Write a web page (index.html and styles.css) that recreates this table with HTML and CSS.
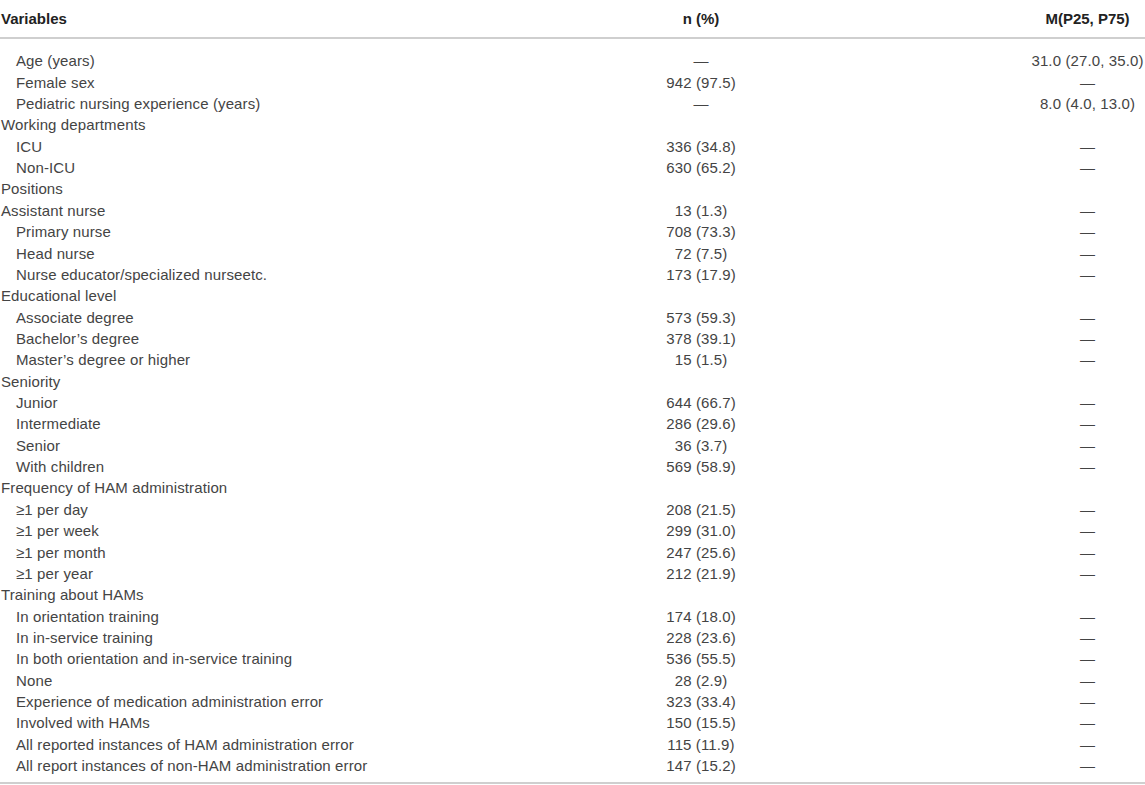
FILE: index.html
```html
<!DOCTYPE html>
<html>
<head>
<meta charset="utf-8">
<link rel="stylesheet" href="styles.css">
</head>
<body>
<div class="table">
  <div class="row head">
    <div class="c1">Variables</div>
    <div class="c2">n (%)</div>
    <div class="c3">M(P25, P75)</div>
  </div>
  <div class="body">
    <div class="row"><div class="c1 ind">Age (years)</div><div class="c2">—</div><div class="c3">31.0 (27.0, 35.0)</div></div>
    <div class="row"><div class="c1 ind">Female sex</div><div class="c2">942 (97.5)</div><div class="c3">—</div></div>
    <div class="row"><div class="c1 ind">Pediatric nursing experience (years)</div><div class="c2">—</div><div class="c3">8.0 (4.0, 13.0)</div></div>
    <div class="row"><div class="c1">Working departments</div><div class="c2"></div><div class="c3"></div></div>
    <div class="row"><div class="c1 ind">ICU</div><div class="c2">336 (34.8)</div><div class="c3">—</div></div>
    <div class="row"><div class="c1 ind">Non-ICU</div><div class="c2">630 (65.2)</div><div class="c3">—</div></div>
    <div class="row"><div class="c1">Positions</div><div class="c2"></div><div class="c3"></div></div>
    <div class="row"><div class="c1">Assistant nurse</div><div class="c2">13 (1.3)</div><div class="c3">—</div></div>
    <div class="row"><div class="c1 ind">Primary nurse</div><div class="c2">708 (73.3)</div><div class="c3">—</div></div>
    <div class="row"><div class="c1 ind">Head nurse</div><div class="c2">72 (7.5)</div><div class="c3">—</div></div>
    <div class="row"><div class="c1 ind">Nurse educator/specialized nurseetc.</div><div class="c2">173 (17.9)</div><div class="c3">—</div></div>
    <div class="row"><div class="c1">Educational level</div><div class="c2"></div><div class="c3"></div></div>
    <div class="row"><div class="c1 ind">Associate degree</div><div class="c2">573 (59.3)</div><div class="c3">—</div></div>
    <div class="row"><div class="c1 ind">Bachelor’s degree</div><div class="c2">378 (39.1)</div><div class="c3">—</div></div>
    <div class="row"><div class="c1 ind">Master’s degree or higher</div><div class="c2">15 (1.5)</div><div class="c3">—</div></div>
    <div class="row"><div class="c1">Seniority</div><div class="c2"></div><div class="c3"></div></div>
    <div class="row"><div class="c1 ind">Junior</div><div class="c2">644 (66.7)</div><div class="c3">—</div></div>
    <div class="row"><div class="c1 ind">Intermediate</div><div class="c2">286 (29.6)</div><div class="c3">—</div></div>
    <div class="row"><div class="c1 ind">Senior</div><div class="c2">36 (3.7)</div><div class="c3">—</div></div>
    <div class="row"><div class="c1 ind">With children</div><div class="c2">569 (58.9)</div><div class="c3">—</div></div>
    <div class="row"><div class="c1">Frequency of HAM administration</div><div class="c2"></div><div class="c3"></div></div>
    <div class="row"><div class="c1 ind">≥1 per day</div><div class="c2">208 (21.5)</div><div class="c3">—</div></div>
    <div class="row"><div class="c1 ind">≥1 per week</div><div class="c2">299 (31.0)</div><div class="c3">—</div></div>
    <div class="row"><div class="c1 ind">≥1 per month</div><div class="c2">247 (25.6)</div><div class="c3">—</div></div>
    <div class="row"><div class="c1 ind">≥1 per year</div><div class="c2">212 (21.9)</div><div class="c3">—</div></div>
    <div class="row"><div class="c1">Training about HAMs</div><div class="c2"></div><div class="c3"></div></div>
    <div class="row"><div class="c1 ind">In orientation training</div><div class="c2">174 (18.0)</div><div class="c3">—</div></div>
    <div class="row"><div class="c1 ind">In in-service training</div><div class="c2">228 (23.6)</div><div class="c3">—</div></div>
    <div class="row"><div class="c1 ind">In both orientation and in-service training</div><div class="c2">536 (55.5)</div><div class="c3">—</div></div>
    <div class="row"><div class="c1 ind">None</div><div class="c2">28 (2.9)</div><div class="c3">—</div></div>
    <div class="row"><div class="c1 ind">Experience of medication administration error</div><div class="c2">323 (33.4)</div><div class="c3">—</div></div>
    <div class="row"><div class="c1 ind">Involved with HAMs</div><div class="c2">150 (15.5)</div><div class="c3">—</div></div>
    <div class="row"><div class="c1 ind">All reported instances of HAM administration error</div><div class="c2">115 (11.9)</div><div class="c3">—</div></div>
    <div class="row"><div class="c1 ind">All report instances of non-HAM administration error</div><div class="c2">147 (15.2)</div><div class="c3">—</div></div>
  </div>
</div>
</body>
</html>
```
FILE: styles.css
```css
html, body {
  margin: 0;
  padding: 0;
  background: #ffffff;
}
body {
  font-family: "Liberation Sans", Arial, sans-serif;
  font-size: 15px;
  color: #444444;
}
.table {
  width: 1145px;
}
.row {
  display: grid;
  grid-template-columns: 600px 202px 1fr;
  height: 21.36px;
  line-height: 21.36px;
  white-space: nowrap;
  letter-spacing: 0.12px;
}
.row.head {
  height: 37px;
  line-height: 37px;
  font-weight: bold;
  color: #222222;
  letter-spacing: 0;
  border-bottom: 2px solid #cfcfcf;
}
.c1 {
  padding-left: 1px;
}
.c1.ind {
  padding-left: 16px;
}
.c2 {
  text-align: center;
}
.c3 {
  text-align: center;
  padding-left: 228px;
}
.body {
  padding-top: 11.3px;
  padding-bottom: 5.5px;
  border-bottom: 2px solid #cfcfcf;
}
```
